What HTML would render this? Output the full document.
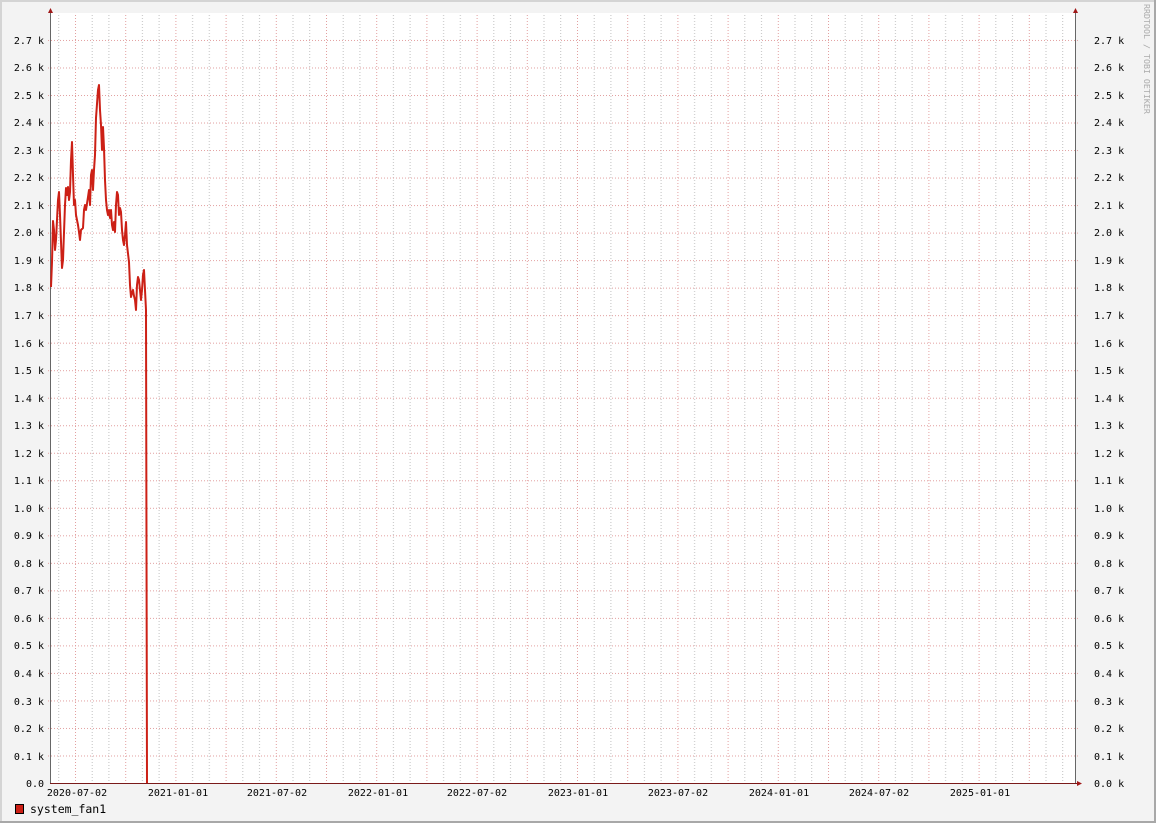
<!DOCTYPE html>
<html><head><meta charset="utf-8"><style>
html,body{margin:0;padding:0;background:#f3f3f3}
svg{display:block}
text{font-family:"DejaVu Sans Mono","Liberation Mono",monospace;font-size:10px;fill:#000}
</style></head><body>
<svg width="1156" height="823" viewBox="0 0 1156 823" xmlns="http://www.w3.org/2000/svg">
<defs>
<pattern id="vg" x="75" y="0" width="50.2" height="823" patternUnits="userSpaceOnUse">
<rect x="0" y="0" width="1" height="823" fill="#e2a0a0"/>
<rect x="16.7" y="0" width="1" height="823" fill="#c2c2c2"/>
<rect x="33.4" y="0" width="1" height="823" fill="#c2c2c2"/>
</pattern>
<pattern id="dash" x="0" y="0" width="3" height="3" patternUnits="userSpaceOnUse">
<rect x="0" y="0" width="3" height="1" fill="#fff"/>
<rect x="0" y="1" width="3" height="2" fill="#000"/>
</pattern>
<mask id="vm"><rect x="0" y="0" width="1156" height="823" fill="url(#dash)"/></mask>
<pattern id="dashh" x="0" y="0" width="3" height="3" patternUnits="userSpaceOnUse">
<rect x="0" y="0" width="1" height="3" fill="#fff"/>
<rect x="1" y="0" width="2" height="3" fill="#000"/>
</pattern>
<mask id="hm"><rect x="0" y="0" width="1156" height="823" fill="url(#dashh)"/></mask>
<pattern id="hg" x="0" y="783" width="1156" height="27.52" patternUnits="userSpaceOnUse">
<rect x="0" y="0" width="1156" height="1" fill="#e2a0a0"/>
</pattern>
</defs>
<rect x="0" y="0" width="1156" height="823" fill="#f3f3f3"/>
<rect x="0" y="0" width="1154" height="2" fill="#d4d4d4"/>
<rect x="0" y="0" width="2" height="821" fill="#d4d4d4"/>
<rect x="1154" y="0" width="2" height="823" fill="#a8a8a8"/>
<rect x="0" y="821" width="1156" height="2" fill="#a8a8a8"/>
<rect x="51" y="13" width="1024" height="770" fill="#fff"/>
<rect x="51" y="13" width="1024" height="770" fill="url(#vg)" mask="url(#vm)"/>
<rect x="46" y="14" width="1034" height="769" fill="url(#hg)" mask="url(#hm)"/>
<line x1="50.5" y1="11" x2="50.5" y2="784" stroke="#666"/>
<line x1="1075.5" y1="11" x2="1075.5" y2="784" stroke="#666"/>
<line x1="50" y1="783.5" x2="1078" y2="783.5" stroke="#7a1a1a"/>
<polygon points="48,13 53,13 50.5,8" fill="#a01818"/>
<polygon points="1073,13 1078,13 1075.5,8" fill="#a01818"/>
<polygon points="1077,781 1077,786 1082,783.5" fill="#a01818"/>
<polyline fill="none" stroke="#cc2016" stroke-width="2" stroke-linejoin="round" points="51,287 52,262 53,221 54,230 55,250 56,240 58,200 59,192 60,215 62,268 63,260 65,205 66,188 67,195 68,187 69,200 70,192 71,160 72,142 73,175 74,205 75,200 76,215 78,225 79,232 80,240 81,230 83,228 84,210 85,205 86,210 88,197 89,190 90,205 91,175 92,170 93,190 94,170 95,155 96,118 98,90 99,85 100,110 101,125 102,150 103,127 104,148 105,180 106,200 107,210 108,215 109,210 110,218 111,210 112,225 113,230 114,222 115,232 116,205 117,192 118,195 119,215 120,208 121,212 122,230 123,240 124,245 125,235 126,222 127,245 129,262 130,285 131,297 132,293 133,290 134,296 135,300 136,310 137,285 138,277 139,280 140,290 141,300 142,290 143,275 144,270 145,290 146,310 147,783"/>
<g text-anchor="end">
<text x="44" y="787">0.0</text>
<text x="44" y="760">0.1 k</text>
<text x="44" y="732">0.2 k</text>
<text x="44" y="705">0.3 k</text>
<text x="44" y="677">0.4 k</text>
<text x="44" y="649">0.5 k</text>
<text x="44" y="622">0.6 k</text>
<text x="44" y="594">0.7 k</text>
<text x="44" y="567">0.8 k</text>
<text x="44" y="539">0.9 k</text>
<text x="44" y="512">1.0 k</text>
<text x="44" y="484">1.1 k</text>
<text x="44" y="457">1.2 k</text>
<text x="44" y="429">1.3 k</text>
<text x="44" y="402">1.4 k</text>
<text x="44" y="374">1.5 k</text>
<text x="44" y="347">1.6 k</text>
<text x="44" y="319">1.7 k</text>
<text x="44" y="291">1.8 k</text>
<text x="44" y="264">1.9 k</text>
<text x="44" y="236">2.0 k</text>
<text x="44" y="209">2.1 k</text>
<text x="44" y="181">2.2 k</text>
<text x="44" y="154">2.3 k</text>
<text x="44" y="126">2.4 k</text>
<text x="44" y="99">2.5 k</text>
<text x="44" y="71">2.6 k</text>
<text x="44" y="44">2.7 k</text>
</g>
<g>
<text x="1094" y="787">0.0 k</text>
<text x="1094" y="760">0.1 k</text>
<text x="1094" y="732">0.2 k</text>
<text x="1094" y="705">0.3 k</text>
<text x="1094" y="677">0.4 k</text>
<text x="1094" y="649">0.5 k</text>
<text x="1094" y="622">0.6 k</text>
<text x="1094" y="594">0.7 k</text>
<text x="1094" y="567">0.8 k</text>
<text x="1094" y="539">0.9 k</text>
<text x="1094" y="512">1.0 k</text>
<text x="1094" y="484">1.1 k</text>
<text x="1094" y="457">1.2 k</text>
<text x="1094" y="429">1.3 k</text>
<text x="1094" y="402">1.4 k</text>
<text x="1094" y="374">1.5 k</text>
<text x="1094" y="347">1.6 k</text>
<text x="1094" y="319">1.7 k</text>
<text x="1094" y="291">1.8 k</text>
<text x="1094" y="264">1.9 k</text>
<text x="1094" y="236">2.0 k</text>
<text x="1094" y="209">2.1 k</text>
<text x="1094" y="181">2.2 k</text>
<text x="1094" y="154">2.3 k</text>
<text x="1094" y="126">2.4 k</text>
<text x="1094" y="99">2.5 k</text>
<text x="1094" y="71">2.6 k</text>
<text x="1094" y="44">2.7 k</text>
</g>
<g text-anchor="middle">
<text x="77" y="796">2020-07-02</text>
<text x="178" y="796">2021-01-01</text>
<text x="277" y="796">2021-07-02</text>
<text x="378" y="796">2022-01-01</text>
<text x="477" y="796">2022-07-02</text>
<text x="578" y="796">2023-01-01</text>
<text x="678" y="796">2023-07-02</text>
<text x="779" y="796">2024-01-01</text>
<text x="879" y="796">2024-07-02</text>
<text x="980" y="796">2025-01-01</text>
</g>
<rect x="15.5" y="804.5" width="8" height="9" fill="#cc2016" stroke="#000"/>
<text x="30" y="813" style="font-size:11.5px">system_fan1</text>
<text transform="translate(1144,4) rotate(90)" style="font-size:8.3px;fill:#aaa">RRDTOOL / TOBI OETIKER</text>
</svg>
</body></html>
